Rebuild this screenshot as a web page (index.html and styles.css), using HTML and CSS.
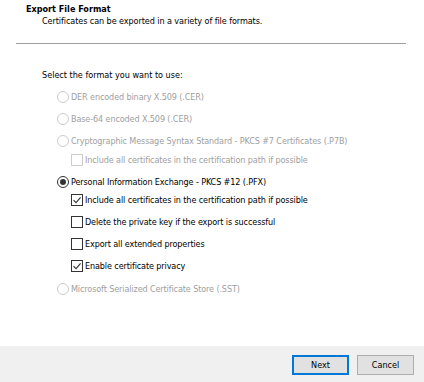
FILE: index.html
```html
<!DOCTYPE html>
<html>
<head>
<meta charset="utf-8">
<link rel="stylesheet" href="styles.css">
</head>
<body>
<div class="wizard">
  <div class="header">
    <div class="title">Export File Format</div>
    <div class="subtitle">Certificates can be exported in a variety of file formats.</div>
  </div>
  <div class="sep"></div>
  <div class="content">
    <div class="prompt">Select the format you want to use:</div>
    <div class="row radio-row disabled r-der"><span class="radio"></span><span>DER encoded binary X.509 (.CER)</span></div>
    <div class="row radio-row disabled"><span class="radio"></span><span>Base-64 encoded X.509 (.CER)</span></div>
    <div class="row radio-row disabled"><span class="radio"></span><span>Cryptographic Message Syntax Standard - PKCS #7 Certificates (.P7B)</span></div>
    <div class="row check-row disabled r-sub1"><span class="box"></span><span>Include all certificates in the certification path if possible</span></div>
    <div class="row radio-row"><span class="radio checked"></span><span>Personal Information Exchange - PKCS #12 (.PFX)</span></div>
    <div class="row check-row r-sub2"><span class="box checked"><svg viewBox="0 0 10 10" width="10" height="10"><path d="M1.5 5.2 L4 7.6 L8.6 2.4" fill="none" stroke="#333" stroke-width="1.1"/></svg></span><span>Include all certificates in the certification path if possible</span></div>
    <div class="row check-row"><span class="box"></span><span>Delete the private key if the export is successful</span></div>
    <div class="row check-row"><span class="box"></span><span>Export all extended properties</span></div>
    <div class="row check-row"><span class="box checked"><svg viewBox="0 0 10 10" width="10" height="10"><path d="M1.5 5.2 L4 7.6 L8.6 2.4" fill="none" stroke="#333" stroke-width="1.1"/></svg></span><span>Enable certificate privacy</span></div>
    <div class="row radio-row disabled r-last"><span class="radio"></span><span>Microsoft Serialized Certificate Store (.SST)</span></div>
  </div>
  <div class="footer">
    <button class="btn default">Next</button>
    <button class="btn">Cancel</button>
  </div>
</div>
</body>
</html>
```

FILE: styles.css
```css
html, body {
  margin: 0;
  padding: 0;
  background: #ffffff;
}
.wizard {
  width: 424px;
  height: 382px;
  display: flex;
  flex-direction: column;
  font-family: "DejaVu Sans Condensed", "DejaVu Sans", sans-serif;
  font-stretch: condensed;
  font-size: 9px;
  color: #000;
}
.header {
  padding-top: 3px;
  height: 40px;
  box-sizing: border-box;
}
.title {
  padding-left: 26px;
  font-weight: bold;
  line-height: 12px;
}
.subtitle {
  padding-left: 42px;
  line-height: 12px;
  letter-spacing: -0.08px;
}
.sep {
  height: 1px;
  margin: 3px 18px 0 16px;
  background: #a0a0a0;
}
.content {
  flex: 1;
  padding-top: 20px;
  padding-left: 42px;
  display: flex;
  flex-direction: column;
}
.prompt {
  height: 22px;
  line-height: 22px;
}
.row {
  height: 22px;
  display: flex;
  align-items: center;
  letter-spacing: -0.12px;
}
.radio-row {
  padding-left: 15px;
}
.check-row {
  padding-left: 29px;
}
.r-sub1 { margin-top: -3px; }
.r-sub2 { margin-top: -4px; }
.r-last { margin-top: 1px; }
.disabled {
  color: #a0a0a0;
}
.radio {
  width: 10px;
  height: 10px;
  border: 1px solid #333;
  border-radius: 50%;
  margin-right: 2px;
  box-sizing: content-box;
  display: flex;
  align-items: center;
  justify-content: center;
  flex: none;
}
.disabled .radio {
  border-color: #cccccc;
}
.radio.checked::after {
  content: "";
  width: 6px;
  height: 6px;
  border-radius: 50%;
  background: #333;
}
.box {
  width: 10px;
  height: 10px;
  border: 1px solid #333;
  margin-right: 2px;
  flex: none;
  display: flex;
  align-items: center;
  justify-content: center;
}
.disabled .box {
  border-color: #cccccc;
}
.footer {
  height: 36px;
  background: #f0f0f0;
  display: flex;
  justify-content: flex-end;
  align-items: flex-start;
  padding: 9px 10px 0 0;
  gap: 8px;
  box-sizing: border-box;
}
.btn {
  width: 57px;
  height: 20px;
  background: #e1e1e1;
  border: 1px solid #adadad;
  font-family: "DejaVu Sans Condensed", "DejaVu Sans", sans-serif;
  font-stretch: condensed;
  font-size: 9px;
  color: #000;
  padding: 0;
  margin: 0;
}
.btn.default {
  border: 2px solid #0078d7;
}
```
